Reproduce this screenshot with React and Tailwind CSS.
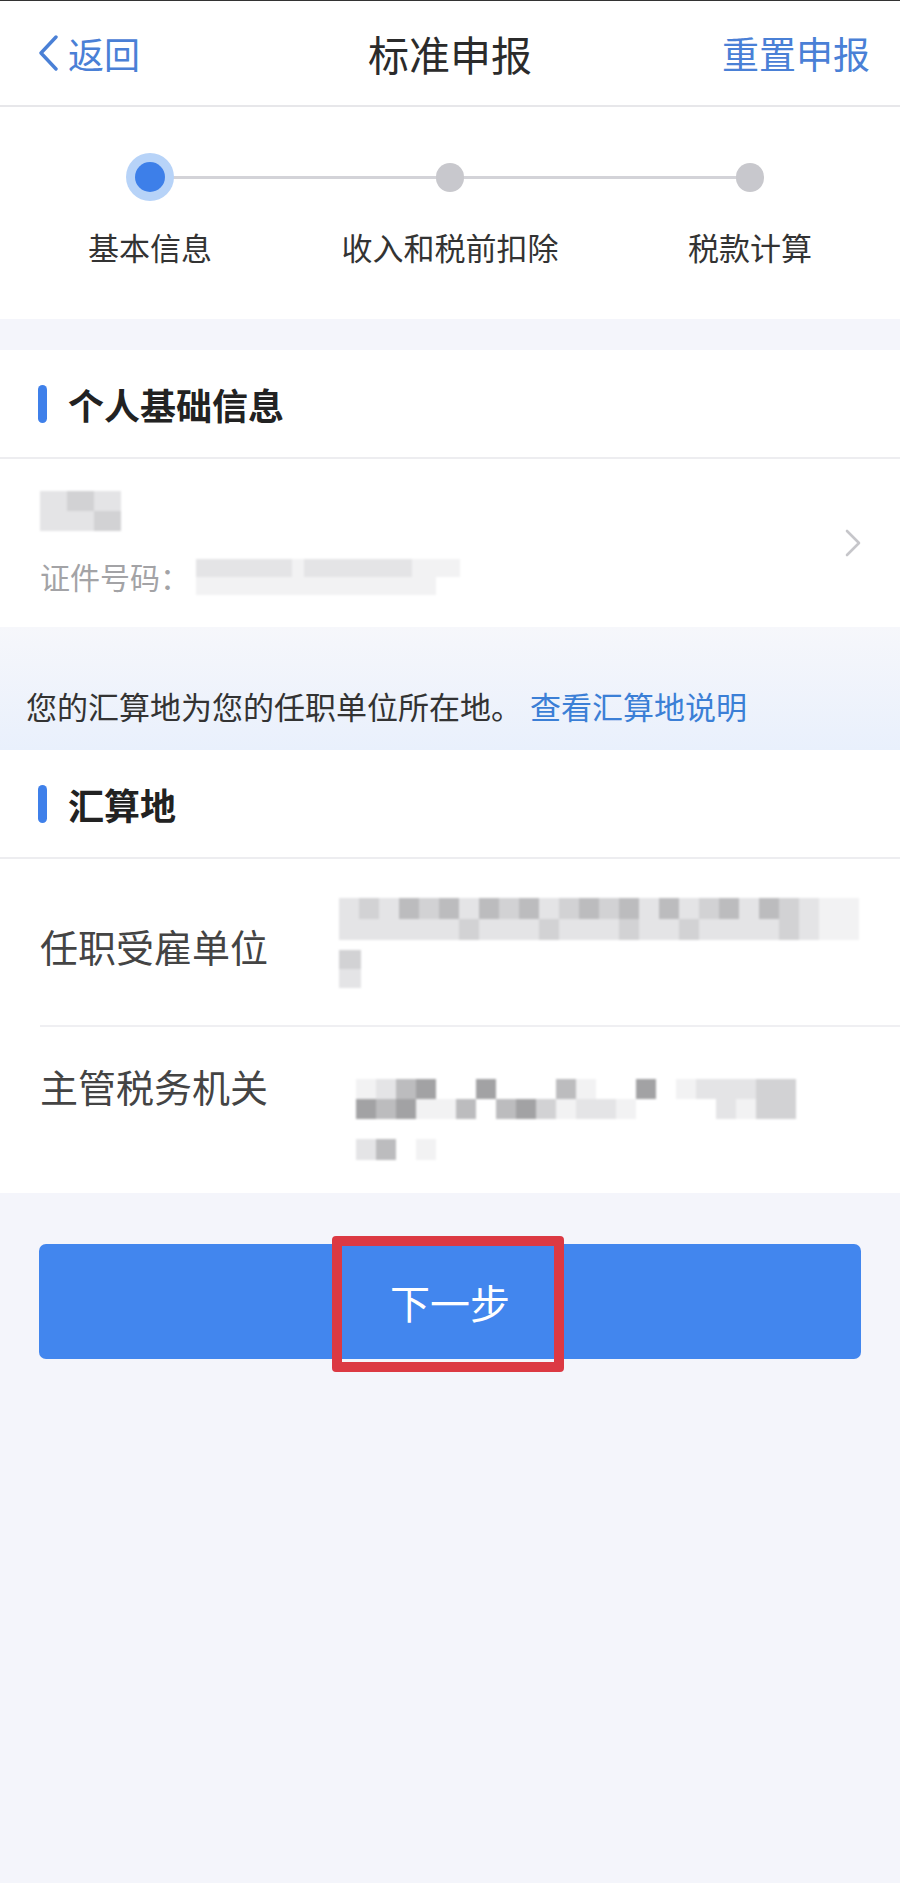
import React from "react";

const SHADES = {
  0: "bg-transparent",
  1: "bg-[#f2f2f3]",
  2: "bg-[#e4e4e6]",
  3: "bg-[#d2d2d4]",
  4: "bg-[#bcbcbe]",
  5: "bg-[#a2a2a4]",
  6: "bg-[#8c8c8e]",
};

const Mosaic = ({ rows, tile, rowH }) => (
  <div className="flex flex-col blur-[1.2px]">
    {rows.map((row, i) => (
      <div key={i} className="flex">
        {row.split("").map((k, j) => (
          <div
            key={j}
            className={SHADES[k]}
            style={{ width: tile, height: rowH }}
          />
        ))}
      </div>
    ))}
  </div>
);

const SectionTitle = ({ children }) => (
  <div className="h-[109px] flex items-center pl-[38px] border-b-2 border-[#ededf0]">
    <span className="w-[9px] h-[38px] rounded-full bg-[#3f80ea]" />
    <span className="ml-[21px] text-[36px] font-bold text-[#222] leading-none">
      {children}
    </span>
  </div>
);

const steps = ["基本信息", "收入和税前扣除", "税款计算"];

const App = () => {
  return (
    <div
      className="min-h-[1883px] w-full bg-[#f4f5fb]"
      style={{ fontFamily: '"Noto Sans CJK SC", "Noto Sans", sans-serif' }}
    >
      {/* header */}
      <div className="h-[107px] bg-white border-t border-t-[#333] border-b-2 border-b-[#e7e7ea] grid grid-cols-[1fr_auto_1fr] items-center">
        <div className="flex items-center pl-[37px] text-[#4a80d6]">
          <svg width="22" height="36" viewBox="0 0 22 36" fill="none">
            <path
              d="M19 2 L4 18 L19 34"
              stroke="currentColor"
              strokeWidth="3.4"
              strokeLinecap="round"
              strokeLinejoin="round"
            />
          </svg>
          <span className="ml-[9px] text-[36px] leading-none">返回</span>
        </div>
        <div className="text-[41px] text-[#2b2b2b] leading-none">标准申报</div>
        <div className="flex justify-end pr-[30px] text-[37px] text-[#4a80d6] leading-none">
          重置申报
        </div>
      </div>

      {/* stepper */}
      <div className="bg-white pt-[46px] pb-[52px]">
        <div className="relative grid grid-cols-3">
          <div className="absolute left-[150px] right-[150px] top-[23px] h-[3px] bg-[#d3d3d8]" />
          {steps.map((s, i) => (
            <div key={s} className="relative flex flex-col items-center">
              <div className="h-[48px] flex items-center justify-center">
                {i === 0 ? (
                  <div className="w-[48px] h-[48px] rounded-full bg-[#b7d3f8] flex items-center justify-center">
                    <div className="w-[30px] h-[30px] rounded-full bg-[#3d7fe9]" />
                  </div>
                ) : (
                  <div className="w-[28px] h-[29px] rounded-full bg-[#c8c8cd]" />
                )}
              </div>
              <div className="mt-[26px] text-[31px] leading-[40px] text-[#333]">
                {s}
              </div>
            </div>
          ))}
        </div>
      </div>

      {/* personal info */}
      <div className="mt-[31px] bg-white">
        <SectionTitle>个人基础信息</SectionTitle>
        <div className="h-[168px] flex items-center justify-between pl-[40px] pr-[38px]">
          <div className="flex flex-col">
            <Mosaic rows={["232", "223"]} tile={27} rowH={20} />
            <div className="mt-[27px] flex items-center">
              <span className="text-[30px] leading-[37px] text-[#a3a3a6]">
                证件号码：
              </span>
              <div className="ml-[6px]">
                <Mosaic
                  rows={["2222222212222222221111", "1111111111111111111100"]}
                  tile={12}
                  rowH={18}
                />
              </div>
            </div>
          </div>
          <svg width="18" height="28" viewBox="0 0 18 28" fill="none">
            <path
              d="M3 2 L15 14 L3 26"
              stroke="#c6c6ca"
              strokeWidth="2.6"
              strokeLinecap="round"
              strokeLinejoin="round"
            />
          </svg>
        </div>
      </div>

      {/* notice */}
      <div className="h-[123px] flex items-center pl-[26px] pt-[34px] bg-gradient-to-b from-[#f6f7fb] to-[#e9f0fc] text-[31px] leading-none">
        <span className="text-[#333]">您的汇算地为您的任职单位所在地。</span>
        <span className="ml-[8px] text-[#3b7fd6]">查看汇算地说明</span>
      </div>

      {/* location */}
      <div className="bg-white">
        <SectionTitle>汇算地</SectionTitle>
        <div className="pl-[40px]">
          <div className="h-[168px] flex border-b-2 border-[#efeff2]">
            <div className="w-[299px] pt-[67px] text-[38px] leading-[40px] text-[#444]">
              任职受雇单位
            </div>
            <div className="pt-[39px] flex flex-col">
              <Mosaic
                rows={[
                  "23243424342343424234243211",
                  "22222232223222322322223211",
                ]}
                tile={20}
                rowH={21}
              />
              <div className="mt-[10px]">
                <Mosaic rows={["3", "2"]} tile={22} rowH={19} />
              </div>
            </div>
          </div>
          <div className="h-[166px] flex">
            <div className="w-[299px] pt-[39px] text-[38px] leading-[40px] text-[#444]">
              主管税务机关
            </div>
            <div className="pt-[52px] pl-[17px] flex flex-col">
              <Mosaic
                rows={[
                  "1245005000410050122233",
                  "5451140453122100002133",
                ]}
                tile={20}
                rowH={20}
              />
              <div className="mt-[20px]">
                <Mosaic rows={["24010"]} tile={20} rowH={21} />
              </div>
            </div>
          </div>
        </div>
      </div>

      {/* next button */}
      <div className="relative mt-[51px] px-[39px]">
        <button className="w-full h-[115px] rounded-[7px] bg-[#4286ee] text-white text-[40px] leading-none">
          下一步
        </button>
        <div className="absolute left-[332px] top-[-8px] w-[232px] h-[136px] border-[10px] border-[#dc3943] rounded-[4px]" />
      </div>
    </div>
  );
};

export default App;
